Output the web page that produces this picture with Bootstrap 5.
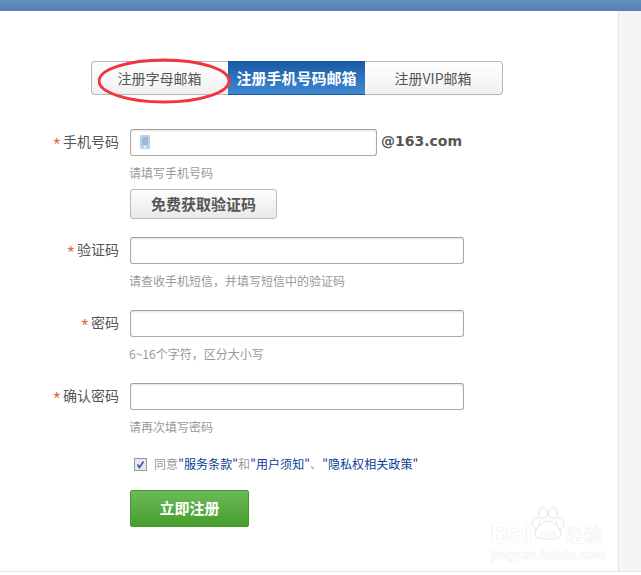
<!DOCTYPE html>
<html lang="zh">
<head>
<meta charset="utf-8">
<title>注册</title>
<link href="https://cdn.jsdelivr.net/npm/bootstrap@5.3.0/dist/css/bootstrap.min.css" rel="stylesheet">
<style>
html,body{height:575px;overflow:hidden}
body{background:#fff;font-family:"Noto Sans CJK SC",sans-serif;color:#555;font-size:14px;position:relative}
.topbar{height:11px;background:linear-gradient(#6191c0,#5581b2)}
.shell{height:561px;border-bottom:1px solid #e4e4e4}
.mainpane{width:619px;border-right:1px solid #e6e6e6;padding:50px 0 0 91px;flex:none}
.sidepane{background:#f5f5f5}
.tabs{width:412px;height:34px;margin-bottom:34px}
.tabitem{width:137px;line-height:32px;text-align:center;border:1px solid #b8b8b8;border-width:1px 0;background:linear-gradient(#fff,#f0f0f0);color:#555;padding-right:1px}
.tabitem:first-child{border-left-width:1px;border-radius:4px 0 0 4px}
.tabitem:last-child{width:138px;border-right-width:1px;border-radius:0 4px 4px 0}
.tabitem.picked{background:linear-gradient(#1a5ca6,#4088d2);border-color:#1a55a0;color:#fff;font-weight:700;font-size:15px;padding-right:0}
.formarea{margin-left:-91px}
.fieldrow{height:27px}
.fieldlabel{width:119px;margin-right:11px;text-align:right;flex:none;line-height:24px}
.star{color:#d9622b;margin-right:3px;font-size:17px;line-height:14px;vertical-align:-3px;font-family:"Liberation Sans",sans-serif}
.fieldbox{width:334px;height:27px;border:1px solid #aaa;border-top-color:#a0a0a0;border-radius:3px;padding:0 8px;box-shadow:inset 0 1px 2px #e4e4e4;background:#fff;outline:0}
.fieldbox.shortbox{width:247px}
.phoneglyph{position:absolute;left:140px;top:6px}
.inputwrap{position:relative;height:27px}
.domain{font-family:"DejaVu Sans",sans-serif;font-weight:700;font-size:14px;color:#555;margin-left:4px;line-height:24px}
.hint{margin:8px 0 0 129px;font-size:12px;line-height:17px;color:#999;height:17px}
.gap46{margin-bottom:21px}
.codebtn{display:block;width:147px;height:30px;margin:8px 0 18px 130px;padding:0;font-size:15px;font-weight:700;line-height:28px;color:#555;border:1px solid #bbb;border-radius:3px;background:linear-gradient(#fdfdfd,#e9e9e9)}
.agree{margin:22px 0 0 134px;font-size:12px;line-height:14px;color:#999;height:14px;letter-spacing:.08px}
.tick{width:13px;height:13px;margin-right:7px;flex:none}
.agree a{color:#0b3c96;text-decoration:none}
.submitbtn{display:block;width:119px;height:37px;margin:19px 0 0 130px;padding:0;font-size:15px;font-weight:700;color:#fff;border:1px solid #4a9330;border-radius:2px;background:linear-gradient(#6cba5a,#449e29)}
.ringmark{position:absolute;left:98px;top:58px}
.wmark{position:absolute;left:490px;top:503px;width:125px;height:70px;color:#fff;text-shadow:0 0 1px #e2e2e2,0 0 1px #e2e2e2}
.wmark .bigword{position:absolute;left:1px;top:18px;font:700 25px/25px "Liberation Sans",sans-serif;letter-spacing:1px}
.wmark .duword{position:absolute;left:51px;top:26px;font:700 12px/12px "Liberation Sans",sans-serif}
.wmark .cnword{position:absolute;left:76px;top:21px;font-size:18px;line-height:20px}
.wmark .urlword{position:absolute;left:1px;top:45px;font:13px/14px "Liberation Sans",sans-serif;letter-spacing:.65px;white-space:nowrap}
.wmark svg{position:absolute;left:40px;top:4px}
</style>
</head>
<body>
<div class="topbar"></div>
<div class="shell d-flex">
  <div class="mainpane">
    <div class="tabs d-flex">
      <div class="tabitem">注册字母邮箱</div>
      <div class="tabitem picked">注册手机号码邮箱</div>
      <div class="tabitem">注册VIP邮箱</div>
    </div>
    <form class="formarea">
      <div class="fieldrow d-flex inputwrap">
        <label class="fieldlabel"><span class="star">*</span>手机号码</label>
        <input class="fieldbox shortbox" type="text" aria-label="手机号码">
        <svg class="phoneglyph" width="10" height="14" viewBox="0 0 10 14"><rect width="10" height="14" rx="1" fill="#bcd2e8"/><rect x="2" y="2" width="6" height="8" fill="#9fb9d6"/><rect x="4" y="11" width="2" height="2" fill="#eef4fa"/></svg>
        <span class="domain">@163.com</span>
      </div>
      <div class="hint">请填写手机号码</div>
      <button class="codebtn" type="button">免费获取验证码</button>
      <div class="fieldrow d-flex">
        <label class="fieldlabel"><span class="star">*</span>验证码</label>
        <input class="fieldbox" type="text" aria-label="验证码">
      </div>
      <div class="hint gap46">请查收手机短信，并填写短信中的验证码</div>
      <div class="fieldrow d-flex">
        <label class="fieldlabel"><span class="star">*</span>密码</label>
        <input class="fieldbox" type="password" aria-label="密码">
      </div>
      <div class="hint gap46">6~16个字符，区分大小写</div>
      <div class="fieldrow d-flex">
        <label class="fieldlabel"><span class="star">*</span>确认密码</label>
        <input class="fieldbox" type="password" aria-label="确认密码">
      </div>
      <div class="hint">请再次填写密码</div>
      <div class="agree d-flex align-items-center">
        <svg class="tick" viewBox="0 0 13 13"><rect x=".5" y=".5" width="12" height="12" fill="#e6e8f0" stroke="#999"/><path d="M3.5 6.5l2 3 4-6" fill="none" stroke="#3c55a5" stroke-width="1.6"/></svg>
        <span>同意<a href="#">"服务条款"</a>和<a href="#">"用户须知"</a>、<a href="#">"隐私权相关政策"</a></span>
      </div>
      <button class="submitbtn" type="button">立即注册</button>
    </form>
  </div>
  <div class="sidepane flex-grow-1"></div>
</div>
<svg class="ringmark" width="134" height="47" viewBox="0 0 134 47"><ellipse cx="66" cy="23" rx="65" ry="21" fill="none" stroke="#f2343c" stroke-width="3"/></svg>
<div class="wmark">
  <span class="bigword">Bai</span>
  <svg width="36" height="34" viewBox="0 0 36 34" fill="#fff" stroke="#e6e6e6"><ellipse cx="6" cy="16" rx="4" ry="5.500"/><ellipse cx="13" cy="6" rx="4.500" ry="5.500"/><ellipse cx="23" cy="6" rx="4.500" ry="5.500"/><ellipse cx="30" cy="16" rx="4" ry="5.500"/><path d="M18 14c-6 0-13 8-13 13 0 5 6 5 13 5s13 0 13-5c0-5-7-13-13-13z"/></svg>
  <span class="duword">du</span>
  <span class="cnword">经验</span>
  <span class="urlword">jingyan.baidu.com</span>
</div>
<script src="https://cdn.jsdelivr.net/npm/bootstrap@5.3.0/dist/js/bootstrap.bundle.min.js"></script>
</body>
</html>
